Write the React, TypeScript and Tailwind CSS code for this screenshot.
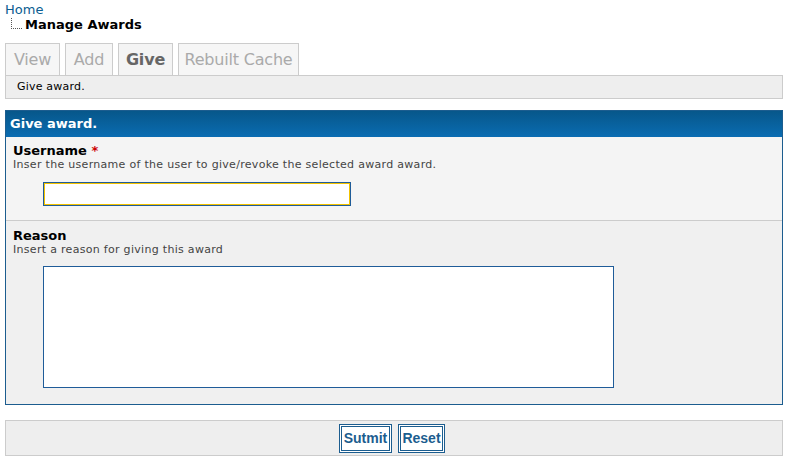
export default function App() {
  const tabs = [
    { label: 'View', w: 'w-[55px]', active: false },
    { label: 'Add', w: 'w-[48px]', active: false },
    { label: 'Give', w: 'w-[55px]', active: true },
    { label: 'Rebuilt Cache', w: 'w-[121px]', active: false },
  ];

  return (
    <div className="h-[459px] w-[788px] bg-white px-[5px] font-['DejaVu_Sans',Verdana,sans-serif] text-black">
      {/* breadcrumb */}
      <div className="pt-[2px]">
        <a className="block text-[13px] leading-[15px] text-[#0b5d91]">Home</a>
        <div className="flex items-end">
          <svg width="14" height="14" className="ml-[5px] mr-[1px]">
            <line x1="1.5" y1="0" x2="1.5" y2="10" stroke="#555" strokeDasharray="1 1" />
            <line x1="1" y1="10.5" x2="12" y2="10.5" stroke="#555" strokeDasharray="1 1" />
          </svg>
          <span className="text-[13px] font-bold leading-[15px]">Manage Awards</span>
        </div>
      </div>

      {/* tabs */}
      <div className="mt-[11px] flex gap-[5px]">
        {tabs.map((t) => (
          <div
            key={t.label}
            className={`flex h-[32px] ${t.w} items-center justify-center border border-b-0 border-[#cccccc] text-[16px] tracking-[-0.2px] ${
              t.active ? 'bg-[#f4f4f4] font-bold text-[#666666]' : 'bg-[#f6f6f6] text-[#aaaaaa]'
            }`}
          >
            {t.label}
          </div>
        ))}
      </div>
      <div className="flex h-[24px] w-[778px] items-center border border-[#cccccc] bg-[#eeeeee] pl-[11px] text-[11px] tracking-[0.2px]">
        Give award.
      </div>

      {/* panel */}
      <div className="mt-[11px] w-[778px] border border-[#1c5d8f]">
        <div className="flex h-[26px] items-center bg-gradient-to-b from-[#07578a] to-[#0a6cb2] pl-[4px] text-[13px] font-bold text-white">
          Give award.
        </div>
        <div className="h-[84px] border-b border-[#cccccc] bg-[#f4f4f4] pl-[7px] pt-[7px]">
          <div className="text-[13px] font-bold leading-[14px]">
            Username <span className="text-[#cc0000]">*</span>
          </div>
          <div className="text-[11px] leading-[13px] tracking-[0.3px] text-[#444444]">
            Inser the username of the user to give/revoke the selected award award.
          </div>
          <input className="ml-[30px] mt-[11px] block h-[24px] w-[308px] border border-[#1f5c99] bg-white shadow-[inset_0_0_0_1px_#f2c200] outline-none" />
        </div>
        <div className="h-[183px] bg-[#f0f0f0] pl-[7px] pt-[8px]">
          <div className="text-[13px] font-bold leading-[14px]">Reason</div>
          <div className="text-[11px] leading-[13px] tracking-[0.3px] text-[#444444]">
            Insert a reason for giving this award
          </div>
          <textarea className="ml-[30px] mt-[10px] block h-[122px] w-[571px] resize-none border border-[#1f5c99] bg-white outline-none" />
        </div>
      </div>

      {/* footer */}
      <div className="mt-[15px] flex h-[36px] w-[778px] items-center justify-center gap-[6px] border border-[#cccccc] bg-[#eeeeee] pr-[4px]">
        <button className="h-[29px] w-[53px] border-[3px] border-double border-[#1c5d8f] bg-white font-['Liberation_Sans',Arial,sans-serif] text-[14px] font-bold text-[#1c5d8f]">
          Sutmit
        </button>
        <button className="h-[29px] w-[47px] border-[3px] border-double border-[#1c5d8f] bg-white font-['Liberation_Sans',Arial,sans-serif] text-[14px] font-bold text-[#1c5d8f]">
          Reset
        </button>
      </div>
    </div>
  );
}
